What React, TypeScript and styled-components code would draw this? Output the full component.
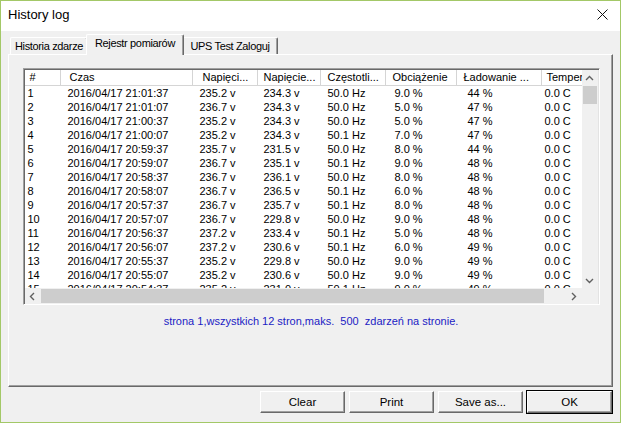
import React from "react";
import styled, { createGlobalStyle } from "styled-components";

const GlobalStyle = createGlobalStyle`
  html, body {
    margin: 0;
    padding: 0;
    background: #f0f0f0;
  }
  * {
    box-sizing: border-box;
  }
`;

interface Column {
  title: string;
  width: number;
  headPad: number;
  cellPad: number;
}

const columns: Column[] = [
  { title: "#", width: 36, headPad: 5, cellPad: 3 },
  { title: "Czas", width: 132, headPad: 9, cellPad: 7 },
  { title: "Napięci...", width: 65, headPad: 10, cellPad: 7 },
  { title: "Napięcie...", width: 63, headPad: 6, cellPad: 6 },
  { title: "Częstotli...", width: 65, headPad: 7, cellPad: 7 },
  { title: "Obciążenie", width: 71, headPad: 7, cellPad: 9 },
  { title: "Ładowanie ...", width: 85, headPad: 7, cellPad: 11 },
  { title: "Temperatura", width: 80, headPad: 5, cellPad: 3 },
];

const rows: string[][] = [
  ["1", "2016/04/17 21:01:37", "235.2 v", "234.3 v", "50.0 Hz", "9.0 %", "44 %", "0.0 C"],
  ["2", "2016/04/17 21:01:07", "236.7 v", "234.3 v", "50.0 Hz", "5.0 %", "47 %", "0.0 C"],
  ["3", "2016/04/17 21:00:37", "235.2 v", "234.3 v", "50.0 Hz", "5.0 %", "47 %", "0.0 C"],
  ["4", "2016/04/17 21:00:07", "235.2 v", "234.3 v", "50.1 Hz", "7.0 %", "47 %", "0.0 C"],
  ["5", "2016/04/17 20:59:37", "235.7 v", "231.5 v", "50.0 Hz", "8.0 %", "44 %", "0.0 C"],
  ["6", "2016/04/17 20:59:07", "236.7 v", "235.1 v", "50.1 Hz", "9.0 %", "48 %", "0.0 C"],
  ["7", "2016/04/17 20:58:37", "236.7 v", "236.1 v", "50.0 Hz", "8.0 %", "48 %", "0.0 C"],
  ["8", "2016/04/17 20:58:07", "236.7 v", "236.5 v", "50.1 Hz", "6.0 %", "48 %", "0.0 C"],
  ["9", "2016/04/17 20:57:37", "236.7 v", "235.7 v", "50.1 Hz", "8.0 %", "48 %", "0.0 C"],
  ["10", "2016/04/17 20:57:07", "236.7 v", "229.8 v", "50.0 Hz", "9.0 %", "48 %", "0.0 C"],
  ["11", "2016/04/17 20:56:37", "237.2 v", "233.4 v", "50.1 Hz", "5.0 %", "48 %", "0.0 C"],
  ["12", "2016/04/17 20:56:07", "237.2 v", "230.6 v", "50.1 Hz", "6.0 %", "49 %", "0.0 C"],
  ["13", "2016/04/17 20:55:37", "235.2 v", "229.8 v", "50.0 Hz", "9.0 %", "49 %", "0.0 C"],
  ["14", "2016/04/17 20:55:07", "235.2 v", "230.6 v", "50.0 Hz", "9.0 %", "49 %", "0.0 C"],
  ["15", "2016/04/17 20:54:37", "235.2 v", "231.0 v", "50.1 Hz", "9.0 %", "49 %", "0.0 C"],
];

const tabs = [
  { label: "Historia zdarze", width: 78 },
  { label: "Rejestr pomiarów", width: 98 },
  { label: "UPS Test Zaloguj", width: 96 },
];
const buttons = ["Clear", "Print", "Save as...", "OK"];

const gridTemplate = columns.map((c) => `${c.width}px`).join(" ");

function Chevron({ dir }: { dir: "up" | "down" | "left" | "right" }) {
  const rot = { up: 0, right: 90, down: 180, left: 270 }[dir];
  return (
    <svg width="9" height="9" viewBox="0 0 9 9">
      <path
        d="M1 6 L4.5 2.5 L8 6"
        fill="none"
        stroke="#606060"
        strokeWidth="1.4"
        transform={`rotate(${rot} 4.5 4.5)`}
      />
    </svg>
  );
}

function App() {
  return (
    <>
      <GlobalStyle />
      <Window>
        <TitleBar>
          <Title>History log</Title>
          <CloseIcon width="11" height="11" viewBox="0 0 11 11">
            <path d="M0.5 0.5 L10.5 10.5 M10.5 0.5 L0.5 10.5" stroke="#111" strokeWidth="1" />
          </CloseIcon>
        </TitleBar>
        <Client>
          <TabStrip>
            {tabs.map((t, i) => (
              <Tab key={t.label} $active={i === 1} $w={t.width}>
                {t.label}
              </Tab>
            ))}
          </TabStrip>
          <Panel>
            <ListView>
              <Viewport>
                <HeaderRow style={{ gridTemplateColumns: gridTemplate }}>
                  {columns.map((c) => (
                    <HeaderCell key={c.title} $pad={c.headPad}>
                      {c.title}
                    </HeaderCell>
                  ))}
                </HeaderRow>
                {rows.map((r) => (
                  <DataRow key={r[0]} style={{ gridTemplateColumns: gridTemplate }}>
                    {r.map((v, i) => (
                      <Cell key={i} $pad={columns[i].cellPad}>
                        {v}
                      </Cell>
                    ))}
                  </DataRow>
                ))}
              </Viewport>
              <VScroll>
                <ArrowBox>
                  <Chevron dir="up" />
                </ArrowBox>
                <VTrack>
                  <VThumb />
                </VTrack>
                <ArrowBox>
                  <Chevron dir="down" />
                </ArrowBox>
              </VScroll>
              <HScroll>
                <ArrowBox>
                  <Chevron dir="left" />
                </ArrowBox>
                <HTrack>
                  <HThumb />
                </HTrack>
                <ArrowBox>
                  <Chevron dir="right" />
                </ArrowBox>
              </HScroll>
              <Corner />
            </ListView>
            <PageInfo>strona 1,wszystkich 12 stron,maks.&nbsp;&nbsp;500&nbsp;&nbsp;zdarzeń na stronie.</PageInfo>
          </Panel>
          <ButtonBar>
            {buttons.map((b) => (
              <PushButton key={b} $default={b === "OK"}>
                {b}
              </PushButton>
            ))}
          </ButtonBar>
        </Client>
      </Window>
    </>
  );
}

const Window = styled.div`
  width: 621px;
  height: 423px;
  border: 1px solid #a3c867;
  display: flex;
  flex-direction: column;
  font-family: "Liberation Sans", Arial, sans-serif;
  font-size: 11px;
  color: #000;
  background: #f0f0f0;
`;

const TitleBar = styled.div`
  height: 30px;
  flex-shrink: 0;
  background: #fff;
  display: flex;
  align-items: center;
  justify-content: space-between;
  padding: 0 12px 4px 7px;
`;

const Title = styled.span`
  font-size: 13px;
  color: #000;
`;

const CloseIcon = styled.svg`
  display: block;
`;

const Client = styled.div`
  flex: 1;
  display: flex;
  flex-direction: column;
  padding: 3px 7px 0 7px;
`;

const TabStrip = styled.div`
  display: flex;
  align-items: flex-end;
  height: 20px;
  padding-left: 2px;
  position: relative;
  z-index: 1;
`;

const Tab = styled.div<{ $active?: boolean; $w: number }>`
  width: ${(p) => p.$w}px;
  height: ${(p) => (p.$active ? "21px" : "17px")};
  margin-bottom: ${(p) => (p.$active ? "-1px" : "0")};
  margin-left: ${(p) => (p.$active ? "-2px" : "0")};
  margin-right: ${(p) => (p.$active ? "-2px" : "0")};
  padding-top: 2px;
  text-align: center;
  background: #f0f0f0;
  border-left: 1px solid #fff;
  border-top: 1px solid #fff;
  border-right: 1px solid #696969;
  box-shadow: inset -1px 0 0 #a0a0a0;
  border-top-left-radius: 2px;
  border-top-right-radius: 2px;
  white-space: nowrap;
  letter-spacing: -0.35px;
  position: relative;
  z-index: ${(p) => (p.$active ? 2 : 1)};
  &:first-child {
    z-index: 0;
  }
`;

const Panel = styled.div`
  height: 333px;
  border-top: 1px solid #fff;
  border-left: 1px solid #fff;
  border-right: 1px solid #696969;
  border-bottom: 1px solid #696969;
  box-shadow: inset -1px -1px 0 #a0a0a0;
  display: flex;
  flex-direction: column;
  align-items: center;
  padding: 13px 13px 0 14px;
`;

const ListView = styled.div`
  width: 577px;
  height: 237px;
  display: grid;
  grid-template-columns: 1fr 16px;
  grid-template-rows: 1fr 16px;
  background: #fff;
  border-top: 1px solid #a0a0a0;
  border-left: 1px solid #a0a0a0;
  border-right: 1px solid #fff;
  border-bottom: 1px solid #fff;
  box-shadow: inset 1px 1px 0 #696969, inset -1px -1px 0 #e3e3e3;
  padding: 1px 1px 0 1px;
`;

const Viewport = styled.div`
  overflow: hidden;
  min-width: 0;
`;

const HeaderRow = styled.div`
  display: grid;
  height: 16px;
`;

const HeaderCell = styled.div<{ $pad: number }>`
  padding-left: ${(p) => p.$pad}px;
  line-height: 15px;
  white-space: nowrap;
  overflow: hidden;
  background: #fff;
  border-right: 1px solid #d5d5d5;
  border-bottom: 1px solid #d5d5d5;
`;

const DataRow = styled.div`
  display: grid;
  height: 14px;
`;

const Cell = styled.div<{ $pad: number }>`
  padding-left: ${(p) => p.$pad}px;
  line-height: 14px;
  white-space: nowrap;
  overflow: hidden;
`;

const VScroll = styled.div`
  display: flex;
  flex-direction: column;
  background: #f0f0f0;
`;

const HScroll = styled.div`
  display: flex;
  background: #f0f0f0;
`;

const ArrowBox = styled.div`
  width: 16px;
  height: 16px;
  flex-shrink: 0;
  display: flex;
  align-items: center;
  justify-content: center;
`;

const VTrack = styled.div`
  flex: 1;
  padding: 0 1px;
`;

const VThumb = styled.div`
  height: 18px;
  background: #cdcdcd;
`;

const HTrack = styled.div`
  flex: 1;
  padding: 1px 0;
  padding-right: 22px;
`;

const HThumb = styled.div`
  height: 100%;
  background: #cdcdcd;
`;

const Corner = styled.div`
  background: #f0f0f0;
`;

const PageInfo = styled.div`
  margin-top: 10px;
  color: #1c1cc4;
  white-space: pre;
`;

const ButtonBar = styled.div`
  display: flex;
  justify-content: flex-end;
  gap: 4px;
  padding: 4px 1px 0 0;
`;

const PushButton = styled.div<{ $default?: boolean }>`
  width: 85px;
  height: 22px;
  display: flex;
  align-items: center;
  justify-content: center;
  background: #f0f0f0;
  border-top: 1px solid #fff;
  border-left: 1px solid #fff;
  border-right: 1px solid #696969;
  border-bottom: 1px solid #696969;
  box-shadow: ${(p) =>
    p.$default
      ? "0 0 0 1px #000, inset -1px -1px 0 #a0a0a0"
      : "inset -1px -1px 0 #a0a0a0"};
  font-size: 11.5px;
`;

export default App;
